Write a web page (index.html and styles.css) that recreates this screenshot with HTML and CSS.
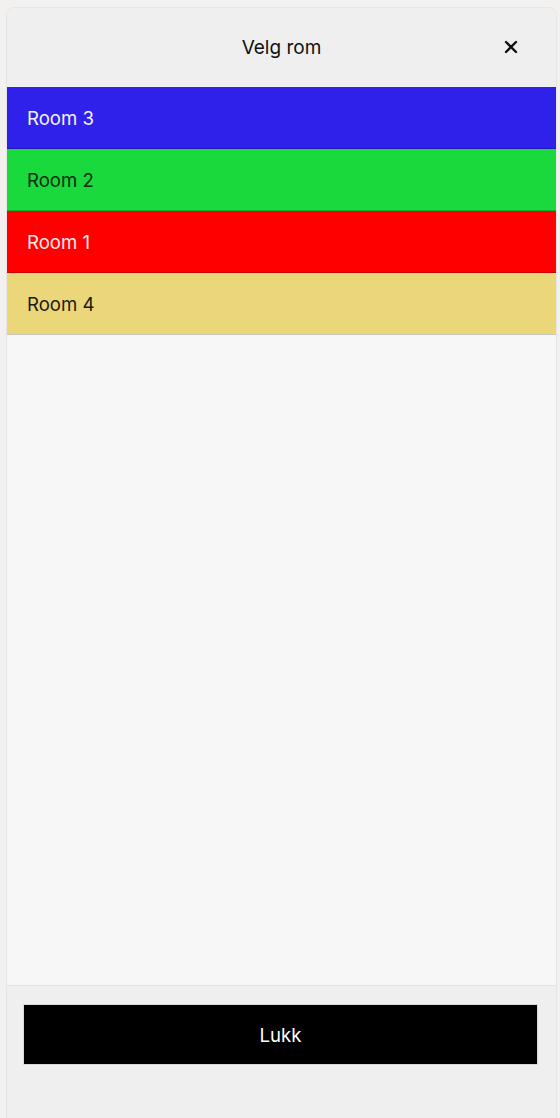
FILE: index.html
```html
<!DOCTYPE html>
<html>
<head>
    <title>Velg rom</title>
    <meta http-equiv="Content-Type" content="text/html; charset=utf-8">
    <link rel="stylesheet" href="styles.css">
</head>
<body>

<div class="modal">
    <div class="modal-header">
        <h1>Velg rom</h1>
        <a href="#" class="close" aria-label="Lukk">
            <svg width="14" height="14" viewBox="0 0 14 14">
                <path d="M2 2 L12 12 M12 2 L2 12" stroke="#111" stroke-width="2.4" stroke-linecap="round"/>
            </svg>
        </a>
    </div>

    <ul class="rooms">
        <li class="room room-blue">Room 3</li>
        <li class="room room-green">Room 2</li>
        <li class="room room-red">Room 1</li>
        <li class="room room-yellow">Room 4</li>
    </ul>

    <div class="modal-footer">
        <a href="#" class="button">Lukk</a>
    </div>
</div>

</body>
</html>
```

FILE: styles.css
```css
body, html {
    width: 100%;
    height: 100%;
    margin: 0;
    padding: 0;
    font-family: 'Inter', 'Helvetica', Arial, sans-serif;
    background-color: #f3f1ef;
    overflow: hidden;
}

.modal {
    display: flex;
    flex-direction: column;
    box-sizing: border-box;
    margin: 7px 3px 0 6px;
    height: calc(100% - 7px);
    background-color: #f7f7f7;
    border: 1px solid #e8e6e4;
    border-bottom: none;
    border-radius: 8px 8px 0 0;
    overflow: hidden;
}

.modal-header {
    position: relative;
    height: 79px;
    display: flex;
    align-items: center;
    justify-content: center;
    background-color: #efefef;
}

h1 {
    margin: 0;
    font-size: 19px;
    font-weight: 400;
    color: #111;
}

.close {
    position: absolute;
    right: 38px;
    top: 32px;
    display: block;
    line-height: 0;
}

.rooms {
    list-style: none;
    margin: 0;
    padding: 0;
    flex: 1;
}

.room {
    height: 61px;
    display: flex;
    align-items: center;
    padding-left: 20px;
    padding-top: 1px;
    box-sizing: border-box;
    height: 62px;
    font-size: 18.6px;
    border-bottom: 1px solid rgba(0, 0, 0, 0.2);
}

.room-blue {
    background-color: #2f20ea;
    color: #f4f4ff;
}

.room-green {
    background-color: #19d93c;
    color: #0e2a12;
}

.room-red {
    background-color: #fe0000;
    color: #ffecec;
}

.room-yellow {
    background-color: #ebd77a;
    color: #1d1a0e;
    border-bottom-color: #c9c6bc;
}

.modal-footer {
    background-color: #efefef;
    border-top: 1px solid #e2e2e2;
    padding: 18px 18px 53px 16px;
}

.button {
    display: flex;
    align-items: center;
    justify-content: center;
    box-sizing: border-box;
    height: 61px;
    background-color: #000;
    border: 1px solid #d8d8d8;
    color: #fff;
    font-size: 18.6px;
    text-decoration: none;
}
```
